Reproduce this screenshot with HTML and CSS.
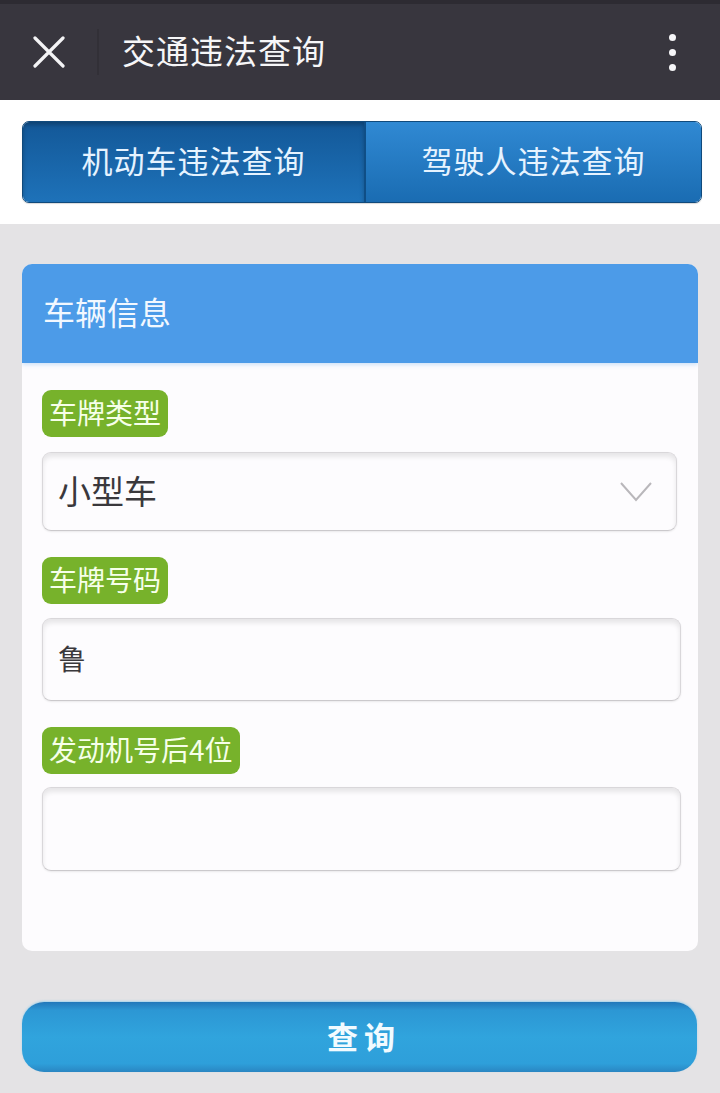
FILE: index.html
```html
<!DOCTYPE html>
<html lang="zh-CN">
<head>
<meta charset="utf-8">
<title>交通违法查询</title>
<link rel="stylesheet" href="styles.css">
</head>
<body>
<header class="topbar">
  <svg class="close" width="32" height="32" viewBox="0 0 32 32"><path d="M2 2 L30 30 M30 2 L2 30" stroke="#f4f4f6" stroke-width="3.2" stroke-linecap="round"/></svg>
  <span class="divider"></span>
  <h1 class="title">交通违法查询</h1>
  <div class="more"><i></i><i></i><i></i></div>
</header>
<div class="tabs-wrap">
  <div class="tabs">
    <div class="tab active">机动车违法查询</div>
    <div class="tab">驾驶人违法查询</div>
  </div>
</div>
<main class="content">
  <section class="card">
    <div class="card-head">车辆信息</div>
    <div class="card-body">
      <div class="label">车牌类型</div>
      <div class="field select"><span>小型车</span>
        <svg class="chev" width="32" height="20" viewBox="0 0 32 20"><path d="M1 1 L16 18 L31 1" fill="none" stroke="#b9b7bb" stroke-width="2"/></svg>
      </div>
      <div class="label">车牌号码</div>
      <div class="field input plate"><span class="small">鲁</span></div>
      <div class="label">发动机号后4位</div>
      <div class="field input engine"></div>
    </div>
  </section>
  <button class="submit">查询</button>
</main>
</body>
</html>
```
FILE: styles.css
```css
* { box-sizing: border-box; }
html, body { margin: 0; padding: 0; }
body {
  width: 720px;
  height: 1093px;
  overflow: hidden;
  background: #e4e3e5;
  font-family: "Noto Sans CJK SC", "Noto Sans", sans-serif;
}
.topbar {
  height: 100px;
  background: #38363e;
  border-top: 4px solid #2d2b32;
  display: flex;
  align-items: center;
  padding-left: 33px;
}
.close { display: block; margin-right: 32px; }
.divider {
  width: 2px;
  height: 46px;
  background: #323037;
  margin-right: 23px;
}
.title {
  margin: 0 0 4px 0;
  font-size: 33px;
  font-weight: 400;
  color: #f6f6f8;
  letter-spacing: 1px;
}
.more {
  margin-left: auto;
  margin-right: 44px;
  display: flex;
  flex-direction: column;
  gap: 8px;
}
.more i {
  display: block;
  width: 7px;
  height: 7px;
  border-radius: 50%;
  background: #f6f6f8;
}
.tabs-wrap {
  background: #fff;
  padding: 21px 18px 21px 22px;
}
.tabs {
  display: flex;
  height: 82px;
  border: 1px solid #104a7c;
  border-radius: 7px;
  overflow: hidden;
  box-shadow: 0 1px 1px rgba(0,0,0,0.15);
}
.tab {
  flex: 1;
  display: flex;
  align-items: center;
  justify-content: center;
  padding-bottom: 5px;
  font-size: 31px;
  color: #e6f3ff;
  background: linear-gradient(#3089d3, #1a6cb2);
  letter-spacing: 1px;
}
.tab.active {
  flex: 0 0 343px;
  background: linear-gradient(#135898, #1e72b9);
  border-right: 2px solid #0f4e86;
  box-shadow: inset 0 3px 4px rgba(0,0,0,0.25);
}
.content {
  padding: 40px 22px 21px 22px;
}
.card {
  background: #fdfcfe;
  border-radius: 10px;
  overflow: hidden;
}
.card-head {
  height: 99px;
  background: #4c9be8;
  color: #f2f8ff;
  font-size: 32px;
  display: flex;
  align-items: center;
  padding: 0 0 6px 21px;
  box-shadow: 0 2px 4px rgba(76,155,232,0.25);
}
.card-body {
  padding: 27px 17px 80px 20px;
}
.label {
  display: flex;
  align-items: center;
  width: fit-content;
  height: 47px;
  padding: 0 7px 3px 7px;
  background: #77b22b;
  color: #f6ffe9;
  font-size: 28px;
  border-radius: 9px;
}
.field {
  height: 83px;
  margin: 14px 0 26px 0;
  border: 1px solid #d9d7da;
  border-bottom-color: #cbc9cc;
  border-radius: 9px;
  background: #fdfcfe;
  box-shadow: inset 0 4px 5px rgba(0,0,0,0.09), 0 1px 2px rgba(0,0,0,0.08);
  display: flex;
  align-items: center;
  padding: 0 0 4px 15px;
  color: #3a383c;
  font-size: 33px;
}
.select {
  height: 79px;
  margin-top: 15px;
  margin-right: 4px;
  justify-content: space-between;
  padding-right: 24px;
}
.chev { display: block; margin-top: 4px; }
.input .small { font-size: 28px; }
.engine {
  height: 84px;
  margin: 13px 0 0 0;
}
.submit {
  display: flex;
  align-items: center;
  justify-content: center;
  width: 675px;
  height: 70px;
  margin-top: 51px;
  border: none;
  border-radius: 22px;
  background: linear-gradient(#2177ba 0%, #2c97d4 12%, #30a4dd 50%, #2e9fda 88%, #2a86c2 100%);
  box-shadow: 0 -1px 2px rgba(120,200,240,0.6);
  color: #f2fbff;
  font-family: "Noto Sans CJK SC", "Noto Sans", sans-serif;
  font-size: 31px;
  font-weight: 700;
  letter-spacing: 6px;
  padding: 0 0 4px 9px;
}
```
